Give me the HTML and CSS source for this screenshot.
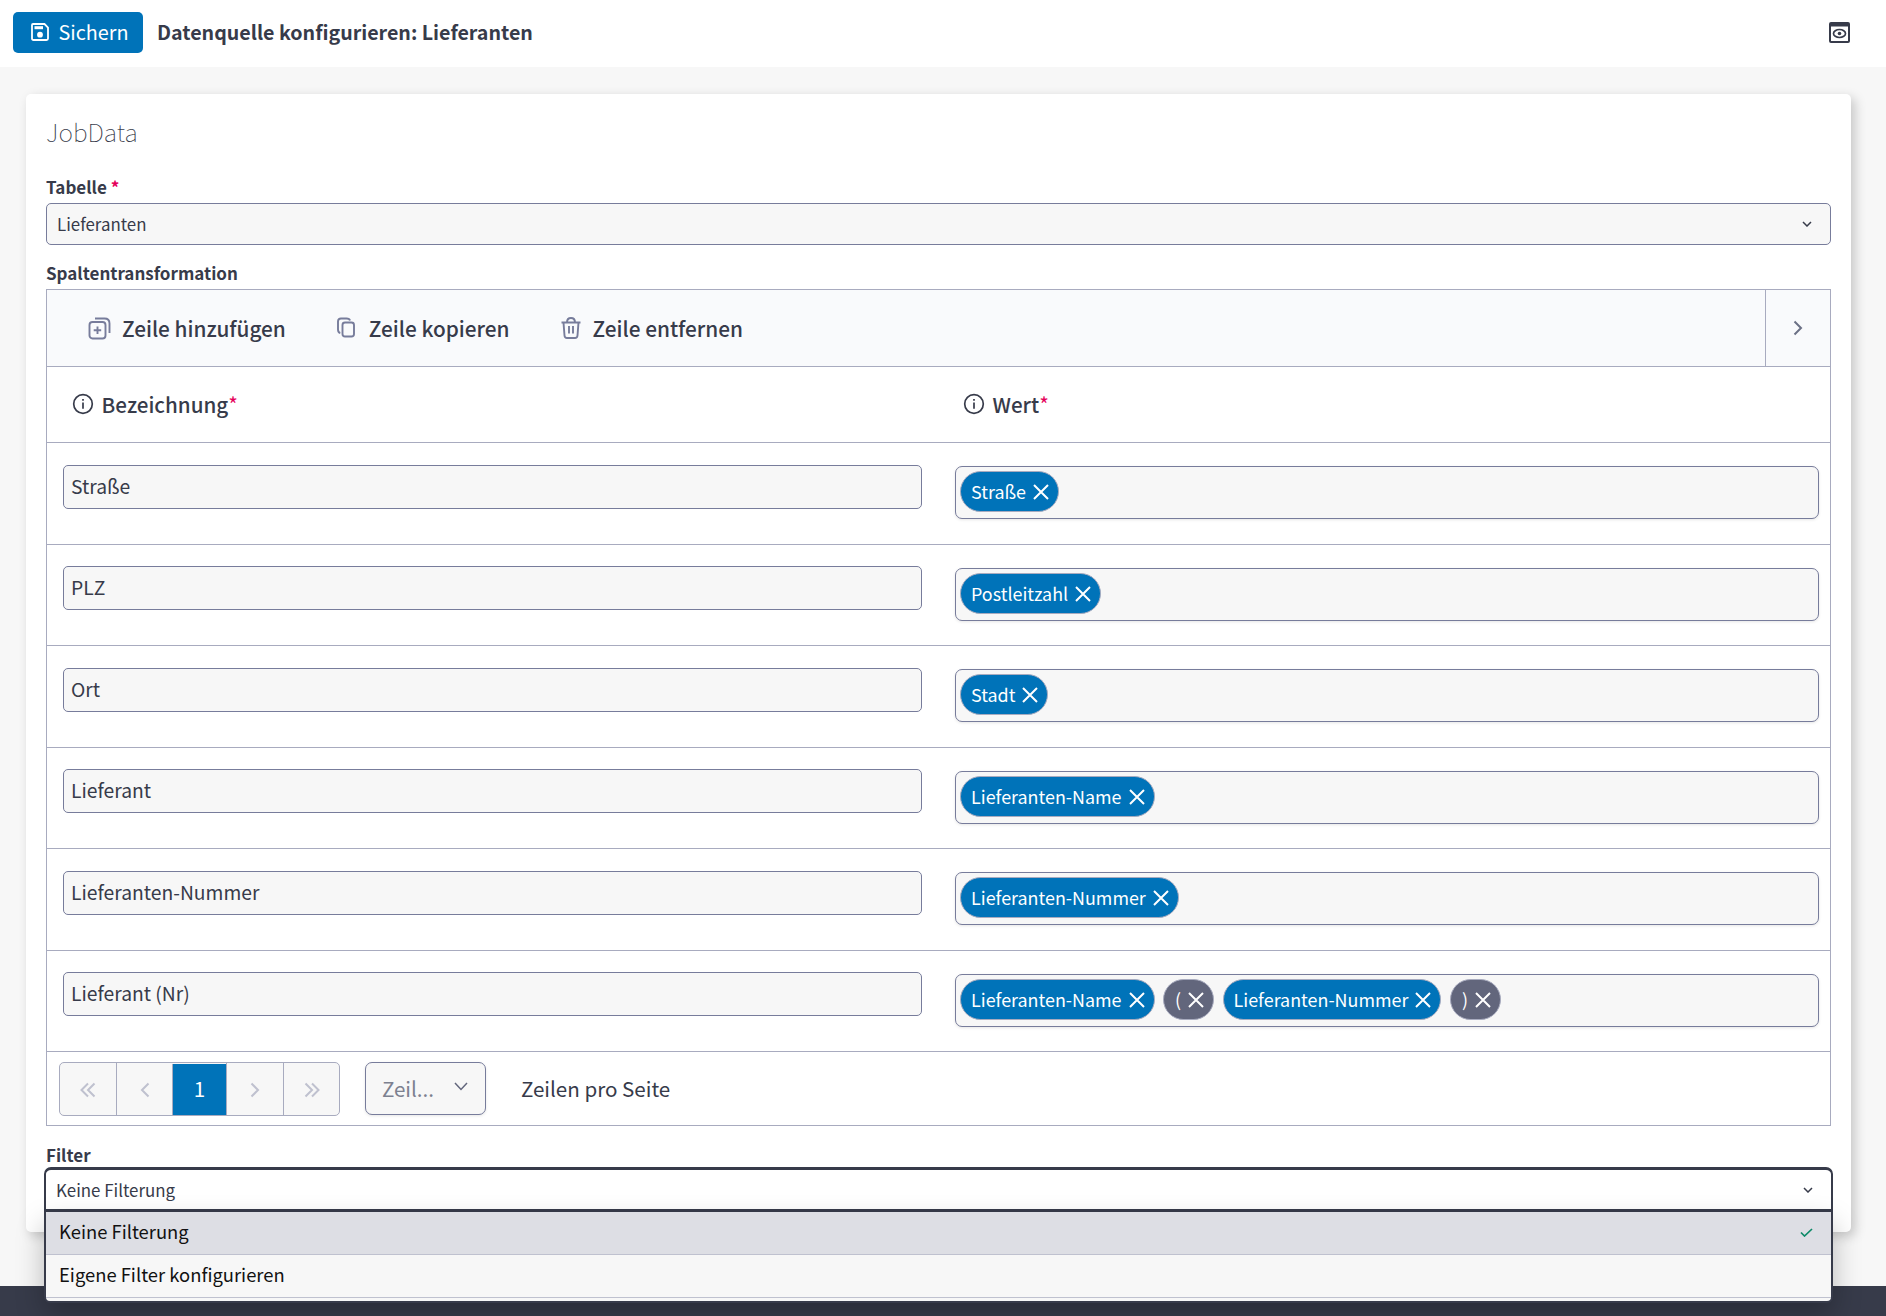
FILE: index.html
```html
<!DOCTYPE html>
<html lang="de">
<head>
    <meta charset="UTF-8">
    <meta name="viewport" content="width=device-width, initial-scale=1.0">
    <title>Datenquelle konfigurieren</title>
    <link rel="stylesheet" href="styles.css">
</head>
<body>
    <header class="topbar">
        <button class="save" type="button">
            <svg class="save-icon" viewBox="0 0 18 18">
                <path d="M2 1h11.500L17 4.500v11q0 1.500-1.500 1.500h-13Q1 17 1 15.500V2q0-1 1-1z" fill="none" stroke="#fff" stroke-width="1.800"/>
                <path d="M3.500 3.200h8.500v3H3.500z" fill="#fff"/>
                <circle cx="9" cy="11.700" r="2.900" fill="#fff"/>
            </svg>
            Sichern
        </button>
        <h1>Datenquelle konfigurieren: Lieferanten</h1>
        <svg class="preview" viewBox="0 0 21 21">
            <rect x="1" y="1" width="19" height="19" rx="1" fill="#fff" stroke="#373b4a" stroke-width="2"/>
            <path d="M1 1h19v3.500H1z" fill="#373b4a"/>
            <ellipse cx="10.500" cy="11.500" rx="6" ry="4" fill="none" stroke="#373b4a" stroke-width="1.700"/>
            <circle cx="10.500" cy="11.500" r="1.800" fill="#373b4a"/>
        </svg>
    </header>

    <main class="card">
        <h2>JobData</h2>

        <label class="label">Tabelle <span class="req">*</span></label>
        <div class="select">
            Lieferanten
            <svg class="chevron" viewBox="0 0 10 6"><path d="M1 1l4 4 4-4"/></svg>
        </div>

        <label class="label label-table">Spaltentransformation</label>
        <div class="table">
            <div class="toolbar">
                <button class="tool" type="button">
                    <svg viewBox="0 0 24 24"><rect x="1.500" y="6" width="16" height="16.500" rx="3"/><path d="M7 2.500h9.500q5 0 5 5V17M9.500 10.500v7.500M5.700 14.200h7.500"/></svg>
                    Zeile hinzufügen
                </button>
                <button class="tool" type="button">
                    <svg viewBox="0 0 24 24"><rect x="7.500" y="6.500" width="11.500" height="14" rx="2.500"/><path d="M5.300 17Q3 16.500 3 13.500V5.500q0-3 3-3h5.500q3 0 3.500 2"/></svg>
                    Zeile kopieren
                </button>
                <button class="tool" type="button">
                    <svg viewBox="0 0 24 24"><path d="M2.500 6.500h19M8 6.500q0-4.500 4-4.500t4 4.500M4.500 6.500l1 13q.2 2.500 2.500 2.500h8q2.300 0 2.500-2.500l1-13M10 10v7.500M14 10v7.500"/></svg>
                    Zeile entfernen
                </button>
                <div class="toolbar-next"><svg viewBox="0 0 10 16"><path d="M1.500 1.500L8 8l-6.500 6.500"/></svg></div>
            </div>
            <div class="row head">
                <div class="th">
                    <svg viewBox="0 0 22 22"><circle cx="11" cy="11" r="9.300"/><path d="M11 9.500V15.800M11 6v1.700"/></svg>
                    <span>Bezeichnung<span class="req">*</span></span>
                </div>
                <div class="th">
                    <svg viewBox="0 0 22 22"><circle cx="11" cy="11" r="9.300"/><path d="M11 9.500V15.800M11 6v1.700"/></svg>
                    <span>Wert<span class="req">*</span></span>
                </div>
            </div>
            <div id="rows"></div>
            <div class="footer-row">
                <div class="pages">
                    <span class="page"><svg viewBox="0 0 16 16"><path d="M8 1.500L1.500 8 8 14.500M14.500 1.500L8 8l6.500 6.500"/></svg></span>
                    <span class="page"><svg viewBox="0 0 16 16"><path d="M11.500 1.500L5 8l6.500 6.500"/></svg></span>
                    <span class="page active">1</span>
                    <span class="page"><svg viewBox="0 0 16 16"><path d="M4.500 1.500L11 8l-6.500 6.500"/></svg></span>
                    <span class="page"><svg viewBox="0 0 16 16"><path d="M1.500 1.500L8 8l-6.500 6.500M8 1.500L14.500 8 8 14.500"/></svg></span>
                </div>
                <div class="page-size">
                    Zeil...
                    <svg viewBox="0 0 14 9"><path d="M1 1l6 6.500L13 1"/></svg>
                </div>
                <span class="per-page">Zeilen pro Seite</span>
            </div>
        </div>

        <label class="label label-filter">Filter</label>
        <div class="select open">
            Keine Filterung
            <svg class="chevron" viewBox="0 0 10 6"><path d="M1 1l4 4 4-4"/></svg>
            <div class="options">
                <div class="option selected">
                    Keine Filterung
                    <svg viewBox="0 0 13 9"><path d="M1 4.500L4.500 8 12 1"/></svg>
                </div>
                <div class="option">Eigene Filter konfigurieren</div>
            </div>
        </div>
    </main>

    <footer class="bottom"></footer>
    <script src="script.js"></script>
</body>
</html>
```

FILE: styles.css
```css
* {
    box-sizing: border-box;
}
body {
    display: flex;
    flex-direction: column;
    height: 1316px;
    margin: 0;
    overflow: hidden;
    background-color: #f7f7f7;
    color: #373b4a;
    font-family: "Noto Sans CJK SC", sans-serif;
}
button {
    border: none;
    background: none;
    color: inherit;
    font-family: inherit;
}
svg {
    flex: none;
    fill: none;
}
.topbar {
    display: flex;
    align-items: center;
    flex: none;
    height: 67px;
    padding: 0 36px 2px 12.5px;
    background: #fff;
}
.save {
    display: flex;
    align-items: center;
    gap: 10px;
    width: 130.5px;
    height: 41px;
    padding: 0 0 3px 18px;
    border-radius: 5px;
    background: #0073b9;
    color: #fff;
    font-size: 19.8px;
}
.save-icon {
    width: 18px;
    height: 18px;
    margin-top: 2px;
}
h1 {
    flex: 1;
    margin: 0 0 0 14px;
    padding-bottom: 3px;
    font-size: 19.65px;
    font-weight: bold;
}
.preview {
    width: 21px;
    height: 21px;
}
.card {
    flex: none;
    width: 1825px;
    height: 1138px;
    margin: 27px 0 0 26px;
    padding: 17px 20px 0;
    border-radius: 5px;
    background: #fff;
    box-shadow: 4px 4px 12px rgba(0, 0, 0, 0.2);
}
h2 {
    height: 43px;
    margin: 0;
    font-size: 24.7px;
    font-weight: 100;
    line-height: 40px;
}
.label {
    display: block;
    height: 24px;
    margin-top: 21px;
    font-size: 17px;
    font-weight: bold;
    line-height: 24px;
}
.req {
    color: #e5005a;
}
.select {
    position: relative;
    display: flex;
    align-items: center;
    justify-content: space-between;
    height: 42px;
    margin-top: 4px;
    padding: 0 18px 2px 10px;
    border: 1px solid #777c9b;
    border-radius: 5px;
    background: #f7f7f7;
    font-size: 16.9px;
}
.chevron {
    width: 10px;
    height: 6px;
    margin-top: 1px;
    stroke: #373b4a;
    stroke-width: 1.5;
}
.label-table {
    margin-top: 16px;
}
.table {
    margin-top: 4px;
    border: 1px solid #a8abbf;
}
.toolbar {
    display: flex;
    align-items: center;
    gap: 49px;
    height: 76px;
    padding-left: 41px;
    background: #f9fafc;
}
.tool {
    display: flex;
    align-items: center;
    gap: 10px;
    padding: 0;
    font-size: 20.8px;
    font-weight: 500;
}
.tool svg {
    width: 24px;
    height: 24px;
    stroke: #777c9b;
    stroke-width: 1.9;
}
.toolbar-next {
    display: flex;
    align-items: center;
    justify-content: center;
    width: 65px;
    height: 76px;
    margin-left: auto;
    border-left: 1px solid #a8abbf;
}
.toolbar-next svg {
    width: 10px;
    height: 16px;
    stroke: #6b7085;
    stroke-width: 2;
}
.row {
    display: grid;
    grid-template-columns: 891px 892px;
    height: 101.5px;
    border-top: 1px solid #a8abbf;
}
.head {
    height: 76px;
    align-items: center;
}
.th {
    display: flex;
    align-items: center;
    gap: 8px;
    padding: 0 0 2px 24.5px;
    font-size: 20.6px;
    font-weight: 500;
}
.th .req {
    font-weight: 400;
}
.th svg {
    width: 22px;
    height: 22px;
    stroke: #373b4a;
    stroke-width: 1.7;
}
.field {
    height: 44px;
    margin: 21.5px 16px 0;
    padding-left: 7px;
    border: 1px solid #777c9b;
    border-radius: 5px;
    background: #f7f7f7;
    font-size: 19.3px;
    line-height: 40px;
}
.chips {
    display: flex;
    gap: 8.5px;
    height: 53px;
    margin: 23px 11px 0 17px;
    padding: 4px;
    border: 1px solid #777c9b;
    border-radius: 7px;
    background: #f7f7f7;
    box-shadow: 0 1px 3px rgba(0, 0, 0, 0.1);
}
.chip {
    display: flex;
    align-items: center;
    gap: 7px;
    height: 41px;
    padding: 0 9px 1px 10px;
    border: 1px solid #a8abbf;
    border-radius: 21px;
    background: #0073b9;
    color: #fff;
    font-size: 17.9px;
}
.chip.plain {
    padding-left: 11px;
    background: #62667c;
}
.chip svg {
    width: 16px;
    height: 16px;
    margin-top: 2px;
    stroke: #fff;
    stroke-width: 2;
}
.footer-row {
    display: flex;
    align-items: center;
    height: 74px;
    padding: 0 0 0 12px;
    border-top: 1px solid #a8abbf;
    font-size: 20.6px;
}
.pages {
    display: grid;
    grid-template-columns: 56px 56px 54px 57px 56px;
    width: 281px;
    height: 54px;
    border: 1px solid #a8abbf;
    border-radius: 5px;
    background: #f7f7f7;
}
.page {
    display: flex;
    align-items: center;
    justify-content: center;
    border-left: 1px solid #a8abbf;
}
.page:first-child {
    border-left: none;
}
.page svg {
    width: 16px;
    height: 16px;
    margin-top: 2px;
    stroke: #bfc1cf;
    stroke-width: 2;
}
.page.active {
    margin-top: 1px;
    padding-bottom: 2px;
    background: #0073b9;
    color: #fff;
}
.page-size {
    display: flex;
    align-items: center;
    justify-content: space-between;
    width: 121px;
    height: 53px;
    margin-left: 25px;
    padding: 0 17px 1px 16px;
    border: 1px solid #777c9b;
    border-radius: 7px;
    background: #f7f7f7;
    color: #7d8190;
    box-shadow: 0 1px 3px rgba(0, 0, 0, 0.1);
}
.page-size svg {
    width: 14px;
    height: 9px;
    margin-bottom: 3px;
    stroke: #62667c;
    stroke-width: 1.5;
}
.per-page {
    margin-left: 35px;
    padding-bottom: 1px;
}
.label-filter {
    margin-top: 17px;
}
.select.open {
    height: 45px;
    margin: 0 -2px;
    padding: 0 18px 1px 10px;
    border: 2px solid #373b4a;
    border-top-width: 3px;
    border-bottom-width: 3px;
    border-radius: 7px 7px 0 0;
    background: #fff;
}
.options {
    position: absolute;
    top: 42px;
    left: -2px;
    right: -2px;
    z-index: 1;
    height: 91px;
    border: 2px solid #373b4a;
    border-top: none;
    border-radius: 0 0 6px 6px;
    background: #f7f7f7;
    box-shadow: 0 12px 28px rgba(0, 0, 0, 0.25);
}
.option {
    display: flex;
    align-items: center;
    justify-content: space-between;
    height: 43px;
    padding: 0 18px 4px 13px;
    border-bottom: 1px solid #bfc1cf;
    color: #111;
    font-size: 18.4px;
}
.option.selected {
    background: #dddee4;
}
.option svg {
    width: 13px;
    height: 9px;
    margin-top: 2px;
    stroke: #0d8a68;
    stroke-width: 1.7;
}
.bottom {
    height: 30px;
    margin-top: auto;
    background: #373b4a;
}
```

FILE: script.js
```javascript
// Zeilen der Spaltentransformation
const daten = [
    ['Straße', ['Straße']],
    ['PLZ', ['Postleitzahl']],
    ['Ort', ['Stadt']],
    ['Lieferant', ['Lieferanten-Name']],
    ['Lieferanten-Nummer', ['Lieferanten-Nummer']],
    ['Lieferant (Nr)', ['Lieferanten-Name', '(', 'Lieferanten-Nummer', ')']]
];

const kreuz = '<svg viewBox="0 0 16 16"><path d="M1 1l14 14M15 1L1 15"/></svg>';

document.getElementById('rows').innerHTML = daten.map(([name, werte]) => {
    const chips = werte.map(wert =>
        `<span class="chip${wert.length === 1 ? ' plain' : ''}">${wert}${kreuz}</span>`
    ).join('');
    return `<div class="row"><div class="field">${name}</div><div class="chips">${chips}</div></div>`;
}).join('');
```
